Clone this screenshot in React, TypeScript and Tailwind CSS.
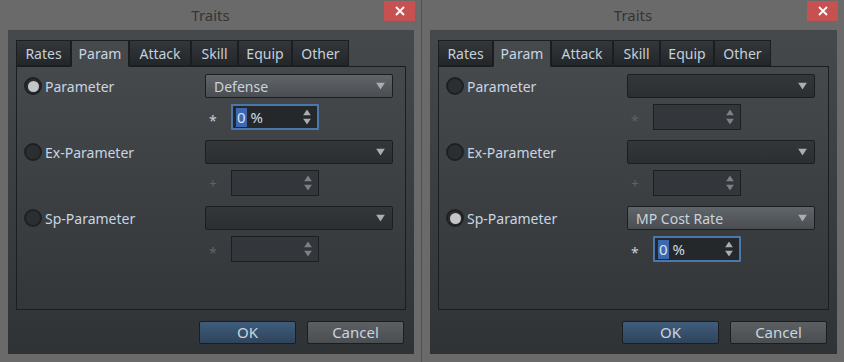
import React from "react";

const font = { fontFamily: '"Noto Sans", "Open Sans", sans-serif' };

function Radio({ on }: { on: boolean }) {
  return (
    <div className="w-[18px] h-[18px] rounded-full bg-[#2c2f32] border-2 border-[#1e2022] flex items-center justify-center">
      {on && <div className="w-[11px] h-[11px] rounded-full bg-[#c4c6c8]" />}
    </div>
  );
}

function Arrow() {
  return (
    <svg width="9" height="7" viewBox="0 0 9 7" className="absolute right-[7px] top-1/2 -translate-y-1/2">
      <path d="M0 0 L9 0 L4.5 7 Z" fill="#a8aeb4" />
    </svg>
  );
}

function Combo({ value }: { value?: string }) {
  return (
    <div
      className={
        "relative w-[188px] h-[24px] rounded-[2px] border border-[#1b1d1f] flex items-center pl-[8px] text-[14px] text-[#c9d3dc] " +
        (value
          ? "bg-gradient-to-b from-[#60656a] to-[#4a4e52]"
          : "bg-gradient-to-b from-[#34373a] to-[#2c2f32]")
      }
    >
      {value}
      <Arrow />
    </div>
  );
}

function SpinArrows({ dim }: { dim?: boolean }) {
  const c = dim ? "#7c8186" : "#a8aeb4";
  return (
    <div className="absolute right-[6px] top-1/2 -translate-y-1/2 flex flex-col gap-[3px]">
      <svg width="8" height="6" viewBox="0 0 8 6">
        <path d="M4 0 L8 6 L0 6 Z" fill={c} />
      </svg>
      <svg width="8" height="6" viewBox="0 0 8 6">
        <path d="M0 0 L8 0 L4 6 Z" fill={c} />
      </svg>
    </div>
  );
}

function Spin({ focus }: { focus: boolean }) {
  if (focus) {
    return (
      <div className="relative w-[88px] h-[26px] border-2 border-[#4a78aa] rounded-[1px] bg-[#25282a] flex items-center pl-[3px] text-[15px] text-[#d0d8e0]">
        <span className="bg-[#3c68b0] text-[#d8e4f0] px-[1px] leading-[19px]">0</span>
        <span className="ml-[4px]">%</span>
        <SpinArrows />
      </div>
    );
  }
  return (
    <div className="relative w-[88px] h-[26px] border border-[#1c1e20] bg-[#33363a]">
      <SpinArrows dim />
    </div>
  );
}

function Row({
  label,
  sign,
  on,
  value,
}: {
  label: string;
  sign: string;
  on: boolean;
  value?: string;
}) {
  return (
    <div className="flex flex-col">
      <div className="flex items-center h-[24px]">
        <div className="w-[188px] flex items-center gap-[3px] pl-[7px]">
          <Radio on={on} />
          <span className="text-[14px] text-[#c8d5e2]">{label}</span>
        </div>
        <Combo value={on ? value : undefined} />
      </div>
      <div className="flex items-center h-[26px] mt-[6px]">
        <div className="w-[188px]" />
        <div
          className={
            "w-[26px] pl-[4px] text-[14px] " +
            (on ? "text-[#c8d0d8]" : "text-[#5c6166]") +
            (sign === "*" ? " translate-y-[3px]" : "")
          }
        >
          {sign}
        </div>
        <Spin focus={on} />
      </div>
    </div>
  );
}

const tabs = [
  { n: "Rates", w: 55 },
  { n: "Param", w: 58 },
  { n: "Attack", w: 62 },
  { n: "Skill", w: 47 },
  { n: "Equip", w: 54 },
  { n: "Other", w: 57 },
];

function Window({ sel, value, className }: { sel: number; value: string; className?: string }) {
  return (
    <div className={"h-[362px] bg-[#6a6a6a] flex flex-col " + (className || "")} style={font}>
      <div className="relative h-[30px] flex items-center justify-center">
        <span className="text-[15px] text-[#353535]">Traits</span>
        <div className="absolute top-[1px] right-[6px] w-[31px] h-[20px] bg-[#c75050] flex items-center justify-center">
          <svg width="10" height="10" viewBox="0 0 10 10">
            <path d="M1 1 L9 9 M9 1 L1 9" stroke="#ffffff" strokeWidth="1.8" />
          </svg>
        </div>
      </div>
      <div className="ml-[8px] mr-[7px] h-[324px] bg-gradient-to-b from-[#46494c] to-[#303336] flex flex-col px-[8px] pt-[10px]">
        <div className="flex h-[26px] relative z-10">
          {tabs.map((t) => (
            <div
              key={t.n}
              style={{ width: t.w }}
              className={
                "flex items-center justify-center text-[14px] border border-[#1b1d1f] " +
                (t.n === "Param"
                  ? "h-[27px] bg-[#46494c] border-b-transparent text-[#c8d5e2]"
                  : "h-[26px] bg-gradient-to-b from-[#33363a] to-[#24272a] text-[#c4d0dc]")
              }
            >
              {t.n}
            </div>
          ))}
        </div>
        <div className="h-[244px] border border-[#1b1d1f] bg-gradient-to-b from-[#46494c] to-[#34373a] pt-[7px] flex flex-col gap-[10px]">
          <Row label="Parameter" sign="*" on={sel === 0} value={value} />
          <Row label="Ex-Parameter" sign="+" on={sel === 1} value={value} />
          <Row label="Sp-Parameter" sign="*" on={sel === 2} value={value} />
        </div>
        <div className="flex justify-end gap-[11px] mt-[11px] pr-[2px]">
          <div className="w-[97px] h-[23px] rounded-[2px] border border-[#1b1d1f] bg-gradient-to-b from-[#405d7c] to-[#2e445c] flex items-center justify-center text-[15px] text-[#c8d4e0]">
            OK
          </div>
          <div className="w-[97px] h-[23px] rounded-[2px] border border-[#1b1d1f] bg-gradient-to-b from-[#5c6063] to-[#4a4e51] flex items-center justify-center text-[15px] text-[#c8d4e0]">
            Cancel
          </div>
        </div>
      </div>
    </div>
  );
}

export default function App() {
  return (
    <div className="w-[844px] h-[362px] flex bg-[#6a6a6a] overflow-hidden">
      <Window sel={0} value="Defense" className="w-[421px]" />
      <div className="w-[1px] h-[362px] bg-[#505050]" />
      <Window sel={2} value="MP Cost Rate" className="w-[422px]" />
    </div>
  );
}
